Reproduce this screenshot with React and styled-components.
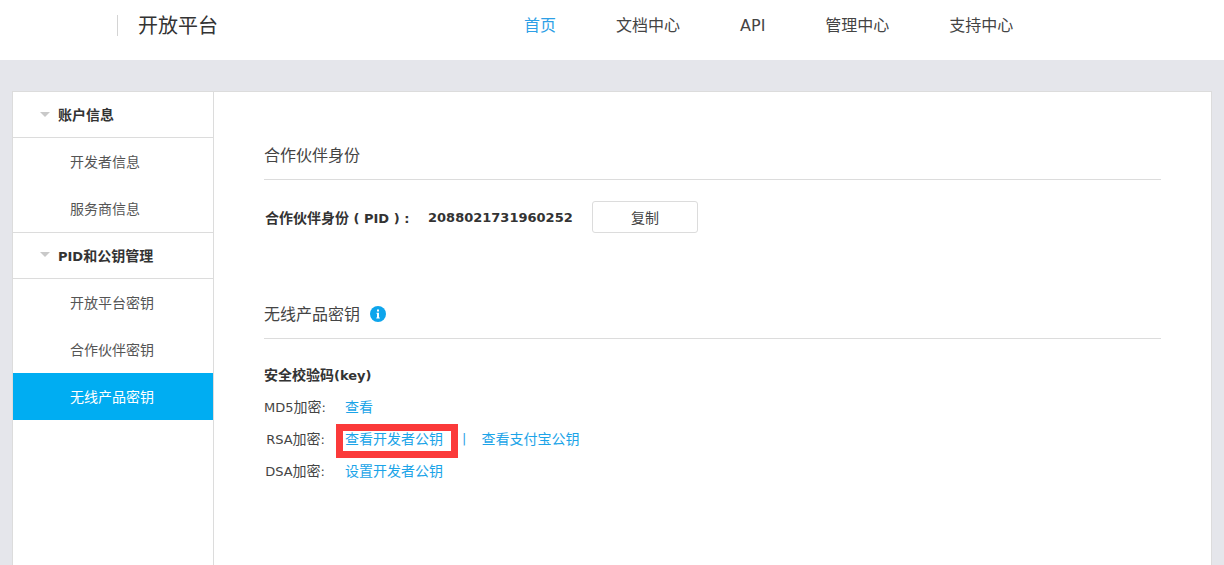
import React from 'react';
import styled, { createGlobalStyle } from 'styled-components';

const FONT = '"DejaVu Sans", "Noto Sans CJK SC", sans-serif';

const GlobalStyle = createGlobalStyle`
  html, body {
    margin: 0;
    height: 565px;
    overflow: hidden;
    background: #e5e6eb;
    font-family: ${FONT};
    color: #333;
  }
`;

const App = () => (
  <>
    <GlobalStyle />
    <Header>
      <Brand>开放平台</Brand>
      <Nav>
        <NavLink $active>首页</NavLink>
        <NavLink>文档中心</NavLink>
        <NavLink>API</NavLink>
        <NavLink>管理中心</NavLink>
        <NavLink>支持中心</NavLink>
      </Nav>
    </Header>

    <Panel>
      <Sidebar>
        <GroupTitle>账户信息</GroupTitle>
        <SideItem>开发者信息</SideItem>
        <SideItem>服务商信息</SideItem>
        <GroupTitle $bordered><Latin>PID</Latin>和公钥管理</GroupTitle>
        <SideItem>开放平台密钥</SideItem>
        <SideItem>合作伙伴密钥</SideItem>
        <SideItem $active>无线产品密钥</SideItem>
      </Sidebar>

      <Main>
        <SectionTitle>合作伙伴身份</SectionTitle>
        <PidRow>
          <PidLabel>合作伙伴身份<Latin> ( PID ) :</Latin></PidLabel>
          <PidValue>2088021731960252</PidValue>
          <CopyButton>复制</CopyButton>
        </PidRow>

        <SectionTitle $second>
          无线产品密钥
          <InfoIcon viewBox="0 0 16 16">
            <circle cx="8" cy="8" r="8" fill="#0ea5ec" />
            <rect x="7" y="3.5" width="2" height="2" fill="#fff" />
            <path d="M6.5 6.8H9V11.4H9.8V12.4H6.3V11.4H7V7.8H6.5Z" fill="#fff" />
          </InfoIcon>
        </SectionTitle>

        <KeyTitle>安全校验码<Latin>(key)</Latin></KeyTitle>
        <KeyRow>
          <KeyLabel><Latin>MD5</Latin>加密<Latin>:</Latin></KeyLabel>
          <KeyLink>查看</KeyLink>
        </KeyRow>
        <KeyRow>
          <KeyLabel><Latin>RSA</Latin>加密<Latin>:</Latin></KeyLabel>
          <Highlight>
            <KeyLink>查看开发者公钥</KeyLink>
          </Highlight>
          <Divider>|</Divider>
          <KeyLink>查看支付宝公钥</KeyLink>
        </KeyRow>
        <KeyRow>
          <KeyLabel><Latin>DSA</Latin>加密<Latin>:</Latin></KeyLabel>
          <KeyLink>设置开发者公钥</KeyLink>
        </KeyRow>
      </Main>
    </Panel>
  </>
);

const Latin = styled.span`
  font-size: 13px;
`;

const Header = styled.header`
  display: flex;
  align-items: center;
  box-sizing: border-box;
  height: 60px;
  padding: 0 0 10px 117px;
  background: #fff;
`;

const Brand = styled.div`
  width: 267px;
  height: 21px;
  padding-left: 20px;
  border-left: 1px solid #d4d4d4;
  font-size: 20px;
  line-height: 22px;
  color: #333;
`;

const Nav = styled.nav`
  display: flex;
  align-items: center;
  gap: 60px;
  margin-left: 119px;
  padding-top: 2px;
`;

const NavLink = styled.a`
  font-size: 16px;
  line-height: 22px;
  color: ${(p) => (p.$active ? '#2e9fe6' : '#444')};
`;

const Panel = styled.div`
  display: flex;
  box-sizing: border-box;
  width: 1200px;
  height: 474px;
  margin: 31px 0 0 12px;
  border: 1px solid #dcdcdc;
  border-bottom: none;
  background: #fff;
`;

const Sidebar = styled.aside`
  flex: none;
  width: 200px;
  border-right: 1px solid #dcdcdc;
`;

const GroupTitle = styled.div`
  position: relative;
  box-sizing: border-box;
  height: ${(p) => (p.$bordered ? '47px' : '46px')};
  padding-left: 45px;
  border-top: ${(p) => (p.$bordered ? '1px solid #dcdcdc' : 'none')};
  border-bottom: 1px solid #dcdcdc;
  font-size: 14px;
  font-weight: bold;
  line-height: 46px;
  color: #333;

  &::before {
    content: '';
    position: absolute;
    left: 27px;
    top: ${(p) => (p.$bordered ? '19px' : '20px')};
    border: 5px solid transparent;
    border-top: 5px solid #c9c9c9;
  }
`;

const SideItem = styled.div`
  height: 47px;
  padding-left: 57px;
  font-size: 14px;
  line-height: 49px;
  color: ${(p) => (p.$active ? '#fff' : '#555')};
  background: ${(p) => (p.$active ? '#00adf2' : 'transparent')};
`;

const Main = styled.main`
  flex: 1;
  padding: 0 50px;
`;

const SectionTitle = styled.h2`
  display: flex;
  align-items: center;
  gap: 10px;
  height: 38px;
  margin: ${(p) => (p.$second ? '61px 0 0' : '43px 0 0')};
  padding: 2px 0 4px;
  border-bottom: 1px solid #dcdcdc;
  font-size: 16px;
  font-weight: normal;
  line-height: 22px;
  color: #444;
`;

const InfoIcon = styled.svg`
  width: 16px;
  height: 16px;
  margin-top: -2px;
`;

const PidRow = styled.div`
  display: flex;
  align-items: center;
  height: 32px;
  margin-top: 21px;
`;

const PidLabel = styled.span`
  box-sizing: border-box;
  width: 164px;
  padding-left: 1px;
  font-size: 14px;
  font-weight: bold;
  white-space: nowrap;
  color: #333;
`;

const PidValue = styled.span`
  width: 164px;
  font-size: 13px;
  font-weight: bold;
  color: #333;
`;

const CopyButton = styled.button`
  width: 106px;
  height: 32px;
  padding: 0;
  border: 1px solid #dcdcdc;
  border-radius: 3px;
  background: #fff;
  font-family: ${FONT};
  font-size: 14px;
  color: #444;
`;

const KeyTitle = styled.div`
  height: 20px;
  margin: 26px 0 5px;
  font-size: 14px;
  font-weight: bold;
  line-height: 20px;
  color: #333;
`;

const KeyRow = styled.div`
  display: flex;
  align-items: center;
  height: 32px;
  font-size: 14px;
`;

const KeyLabel = styled.span`
  flex: none;
  width: 61px;
  margin-right: 20px;
  text-align: right;
  white-space: nowrap;
  color: #444;
`;

const KeyLink = styled.a`
  color: #1ba4e8;
`;

const Highlight = styled.span`
  box-sizing: border-box;
  width: 122px;
  height: 34px;
  margin: 6px 0 0 -9px;
  padding: 0 8px 0 2px;
  border: 7px solid #fb3a3a;
  line-height: 16px;
`;

const Divider = styled.span`
  margin: 0 15px 0 4px;
  font-size: 13px;
  color: #2e9fe6;
`;

export default App;
